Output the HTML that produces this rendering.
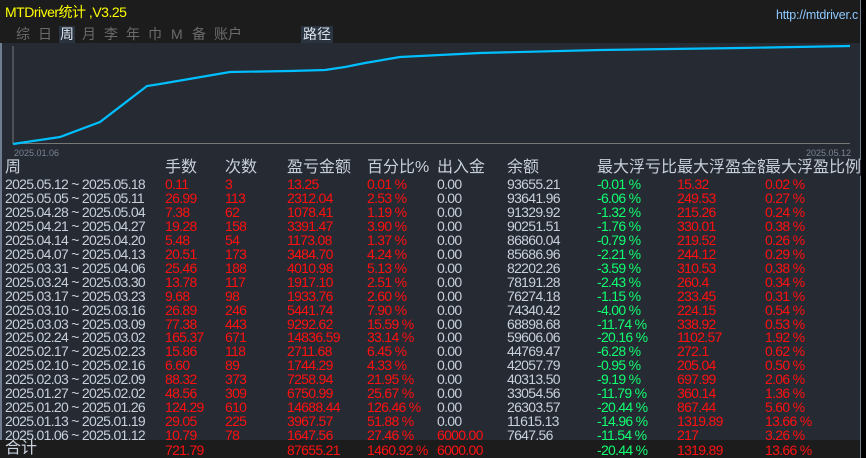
<!DOCTYPE html>
<html><head><meta charset="utf-8"><style>
body{margin:0;width:866px;height:458px;background:#000;overflow:hidden;font-family:"Liberation Sans","Noto Sans CJK SC",sans-serif;position:relative}
#top{position:absolute;left:0;top:0;width:860px;height:43px;background:#1c1c1c}
#panel{position:absolute;left:0;top:43px;width:860px;height:397px;background:#252a33;border-left:2px solid #6f7d8f;box-sizing:border-box}
#tot{position:absolute;left:0;top:440px;width:860px;height:18px;background:#1c1c1c}
.t{position:absolute;white-space:nowrap;font-size:14px;letter-spacing:-0.7px;line-height:16px}
.g{color:#c8d0dc}.r{color:#ff1010}.n{color:#10ff70}
.tab{position:absolute;top:26px;font-size:14px;color:#6b6b6b;line-height:17px}
.h{font-size:16px;color:#c8d0dc;letter-spacing:0}
</style></head><body>
<div id="top"></div><div id="panel"></div><div id="tot"></div>
<div style="position:absolute;left:860px;top:0;width:1px;height:458px;background:#6f7d8f"></div>
<div class="t" style="left:5px;top:4px;color:#ffff00;font-size:14px;letter-spacing:-0.5px">MTDriver统计 ,V3.25</div>
<div class="t" style="left:776px;top:7px;color:#8ec8ff;font-size:12.5px;letter-spacing:-0.2px">http://mtdriver.c</div>
<div class="tab" style="left:16px">综</div><div class="tab" style="left:38px">日</div>
<div class="tab" style="left:59px;background:#2a3340;color:#dde4ee;padding:0 1px">周</div>
<div class="tab" style="left:82px">月</div><div class="tab" style="left:104px">李</div><div class="tab" style="left:126px">年</div><div class="tab" style="left:148px">巾</div><div class="tab" style="left:171px">M</div><div class="tab" style="left:192px">备</div><div class="tab" style="left:214px">账户</div>
<div class="tab" style="left:301px;background:#2a3340;color:#dde4ee;padding:0 2px">路径</div>
<svg style="position:absolute;left:0;top:0" width="866" height="458">
<line x1="13" y1="46" x2="13" y2="144" stroke="#777" stroke-width="1"/>
<line x1="13" y1="143.5" x2="850" y2="143.5" stroke="#777" stroke-width="1"/>
<polyline fill="none" stroke="#00bfff" stroke-width="2.2" points="13,144 60,137 100,122 147,86 160,84 230,72 290,71 325,70 345,67 365,63 400,57 480,53 600,50 740,48 850,46"/>
</svg>
<div class="t" style="left:14px;top:145px;color:#7a8494;font-size:9px;letter-spacing:0">2025.01.06</div>
<div class="t" style="left:806px;top:145px;color:#7a8494;font-size:9px;letter-spacing:0">2025.05.12</div>
<div class="t h" style="left:5px;top:160px">周</div>
<div class="t h" style="left:165px;top:160px">手数</div>
<div class="t h" style="left:225px;top:160px">次数</div>
<div class="t h" style="left:287px;top:160px">盈亏金额</div>
<div class="t h" style="left:367px;top:160px">百分比%</div>
<div class="t h" style="left:437px;top:160px">出入金</div>
<div class="t h" style="left:507px;top:160px">余额</div>
<div class="t h" style="left:597px;top:160px">最大浮亏比例</div>
<div class="t h" style="left:677px;top:160px;background:#252a33">最大浮盈金额</div>
<div class="t h" style="left:765px;top:160px;background:#252a33">最大浮盈比例</div>
<div id="rows"></div>
<div class="t h" style="left:5px;top:441px">合计</div>
<div class="t r" style="left:165px;top:442px">721.79</div>
<div class="t r" style="left:287px;top:442px">87655.21</div>
<div class="t r" style="left:367px;top:442px">1460.92 %</div>
<div class="t r" style="left:437px;top:442px">6000.00</div>
<div class="t n" style="left:597px;top:442px">-20.44 %</div>
<div class="t r" style="left:677px;top:442px">1319.89</div>
<div class="t r" style="left:765px;top:442px">13.66 %</div>
<script>
var d=[
["2025.05.12 ~ 2025.05.18","0.11","3","13.25","0.01 %","0.00","93655.21","-0.01 %","15.32","0.02 %"],
["2025.05.05 ~ 2025.05.11","26.99","113","2312.04","2.53 %","0.00","93641.96","-6.06 %","249.53","0.27 %"],
["2025.04.28 ~ 2025.05.04","7.38","62","1078.41","1.19 %","0.00","91329.92","-1.32 %","215.26","0.24 %"],
["2025.04.21 ~ 2025.04.27","19.28","158","3391.47","3.90 %","0.00","90251.51","-1.76 %","330.01","0.38 %"],
["2025.04.14 ~ 2025.04.20","5.48","54","1173.08","1.37 %","0.00","86860.04","-0.79 %","219.52","0.26 %"],
["2025.04.07 ~ 2025.04.13","20.51","173","3484.70","4.24 %","0.00","85686.96","-2.21 %","244.12","0.29 %"],
["2025.03.31 ~ 2025.04.06","25.46","188","4010.98","5.13 %","0.00","82202.26","-3.59 %","310.53","0.38 %"],
["2025.03.24 ~ 2025.03.30","13.78","117","1917.10","2.51 %","0.00","78191.28","-2.43 %","260.4","0.34 %"],
["2025.03.17 ~ 2025.03.23","9.68","98","1933.76","2.60 %","0.00","76274.18","-1.15 %","233.45","0.31 %"],
["2025.03.10 ~ 2025.03.16","26.89","246","5441.74","7.90 %","0.00","74340.42","-4.00 %","224.15","0.54 %"],
["2025.03.03 ~ 2025.03.09","77.38","443","9292.62","15.59 %","0.00","68898.68","-11.74 %","338.92","0.53 %"],
["2025.02.24 ~ 2025.03.02","165.37","671","14836.59","33.14 %","0.00","59606.06","-20.16 %","1102.57","1.92 %"],
["2025.02.17 ~ 2025.02.23","15.86","118","2711.68","6.45 %","0.00","44769.47","-6.28 %","272.1","0.62 %"],
["2025.02.10 ~ 2025.02.16","6.60","89","1744.29","4.33 %","0.00","42057.79","-0.95 %","205.04","0.50 %"],
["2025.02.03 ~ 2025.02.09","88.32","373","7258.94","21.95 %","0.00","40313.50","-9.19 %","697.99","2.06 %"],
["2025.01.27 ~ 2025.02.02","48.56","309","6750.99","25.67 %","0.00","33054.56","-11.79 %","360.14","1.36 %"],
["2025.01.20 ~ 2025.01.26","124.29","610","14688.44","126.46 %","0.00","26303.57","-20.44 %","867.44","5.60 %"],
["2025.01.13 ~ 2025.01.19","29.05","225","3967.57","51.88 %","0.00","11615.13","-14.96 %","1319.89","13.66 %"],
["2025.01.06 ~ 2025.01.12","10.79","78","1647.56","27.46 %","6000.00","7647.56","-11.54 %","217","3.26 %"]];
var x=[5,165,225,287,367,437,507,597,677,765],h="";
d.forEach(function(r,i){var y=176+i*13.95;r.forEach(function(v,j){var c=(j==0||j==6||(j==5&&v=="0.00"))?"g":(j==7?"n":"r");h+='<div class="t '+c+'" style="left:'+x[j]+'px;top:'+y+'px">'+v+'</div>';});});
document.getElementById("rows").innerHTML=h;
</script>
</body></html>
